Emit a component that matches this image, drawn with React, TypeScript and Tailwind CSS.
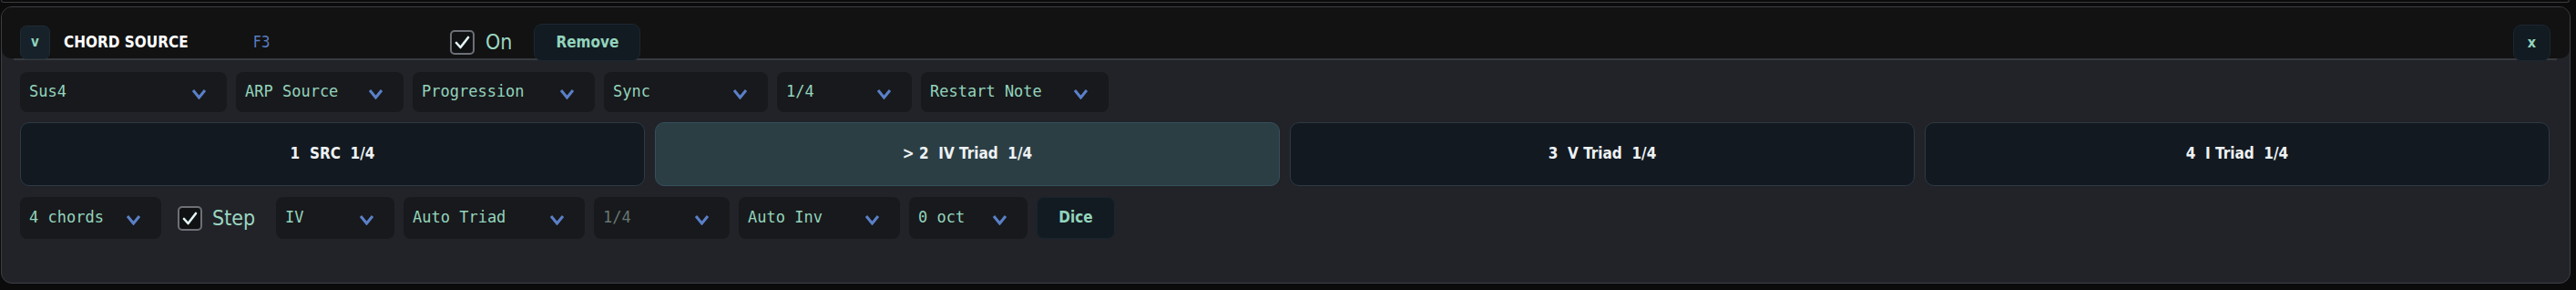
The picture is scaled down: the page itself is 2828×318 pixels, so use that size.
import React from 'react';

const cond = "font-['DejaVu_Sans_Condensed','DejaVu_Sans',sans-serif] font-stretch-condensed";
const mono = "font-['DejaVu_Sans_Mono','Liberation_Mono',monospace]";

const Chevron = () => (
  <svg width="17" height="12" viewBox="0 0 17 12" className="mt-[4px] shrink-0">
    <polyline points="2,2 8.5,10 15,2" fill="none" stroke="#5a80c8" strokeWidth="3" strokeLinejoin="miter" />
  </svg>
);

const Select = ({ label, w, h, muted }: { label: string; w: string; h: string; muted?: boolean }) => (
  <div className={`${w} ${h} shrink-0 flex items-center justify-between pl-[10px] pr-[22px] rounded-[8px] bg-[#18191c]`}>
    <span className={`${mono} text-[17px] ${muted ? 'text-[#65786f]' : 'text-[#93d4bd]'}`}>{label}</span>
    <Chevron />
  </div>
);

const Check = () => (
  <div className="w-[27px] h-[27px] shrink-0 rounded-[5px] border-2 border-[#6c7076] bg-[#101113] flex items-center justify-center">
    <svg width="19" height="17" viewBox="0 0 19 17">
      <polyline points="3,9 7.5,14 16,3" fill="none" stroke="#e2f4f6" strokeWidth="2.6" strokeLinecap="round" strokeLinejoin="round" />
    </svg>
  </div>
);

const slots = [
  { label: '1  SRC  1/4', active: false },
  { label: '> 2  IV Triad  1/4', active: true },
  { label: '3  V Triad  1/4', active: false },
  { label: '4  I Triad  1/4', active: false },
];

export default function App() {
  return (
    <div className="w-[2828px] h-[318px] bg-[#0b0b0b] overflow-hidden">
      {/* bottom edge of the panel above */}
      <div className="ml-[1px] mr-[7px] h-[3px] border-x border-b border-[#3a3c40] rounded-b-[10px]" />

      <div className="mt-[4px] ml-[1px] mr-[6px] h-[304px] rounded-[12px] border border-[#3c3f44] bg-[#212328] overflow-hidden">
        {/* Header */}
        <div className="h-[56px] bg-[#121212] rounded-b-[10px] pl-[20px] pr-[21px] pt-[18px]">
          <div className="h-[41px] flex items-center">
            <div className={`w-[33px] h-[37px] rounded-[7px] bg-[#16212a] border border-[#1f2b35] flex items-center justify-center ${cond} font-bold text-[15px] text-[#8fd3bd]`}>
              v
            </div>
            <div className={`ml-[15px] w-[208px] ${cond} font-bold text-[17px] text-white`}>CHORD SOURCE</div>
            <div className={`w-[216px] ${cond} text-[17px] text-[#5b7ec0]`}>F3</div>
            <Check />
            <span className={`ml-[12px] ${cond} text-[23px] text-[#9cd6c1]`}>On</span>
            <div className={`ml-[24px] w-[117px] h-[41px] rounded-[9px] bg-[#121b22] border border-[#1c2731] flex items-center justify-center ${cond} font-bold text-[17px] text-[#93d4bd]`}>
              Remove
            </div>
            <div className={`ml-auto w-[41px] h-[40px] rounded-[9px] bg-[#121b22] border border-[#1c2731] flex items-center justify-center ${cond} font-bold text-[16px] text-[#93d4bd]`}>
              x
            </div>
          </div>
        </div>
        <div className="ml-[13px] mr-[14px] h-[2px] bg-[#373a3f]" />

        {/* Row 1 */}
        <div className="mt-[13px] pl-[20px] flex gap-[10px]">
          <Select label="Sus4" w="w-[227px]" h="h-[44px]" />
          <Select label="ARP Source" w="w-[184px]" h="h-[44px]" />
          <Select label="Progression" w="w-[200px]" h="h-[44px]" />
          <Select label="Sync" w="w-[180px]" h="h-[44px]" />
          <Select label="1/4" w="w-[148px]" h="h-[44px]" />
          <Select label="Restart Note" w="w-[206px]" h="h-[44px]" />
        </div>

        {/* Chord slots */}
        <div className="mt-[11px] pl-[20px] pr-[22px] grid grid-cols-4 gap-[11px]">
          {slots.map((s) => (
            <div
              key={s.label}
              className={`h-[70px] rounded-[10px] border flex items-center justify-center ${
                s.active ? 'bg-[#2b3e44] border-[#36505d]' : 'bg-[#131920] border-[#2d3a46]'
              }`}
            >
              <span className={`${cond} font-bold text-[17px] text-[#eef2f4] whitespace-pre`}>{s.label}</span>
            </div>
          ))}
        </div>

        {/* Row 3 */}
        <div className="mt-[12px] pl-[20px] flex items-center">
          <Select label="4 chords" w="w-[155px]" h="h-[46px]" />
          <div className="w-[126px] pl-[18px] flex items-center">
            <Check />
            <span className={`ml-[11px] ${cond} text-[23px] text-[#9cd6c1]`}>Step</span>
          </div>
          <div className="flex gap-[10px]">
            <Select label="IV" w="w-[130px]" h="h-[46px]" />
            <Select label="Auto Triad" w="w-[199px]" h="h-[46px]" />
            <Select label="1/4" w="w-[149px]" h="h-[46px]" muted />
            <Select label="Auto Inv" w="w-[177px]" h="h-[46px]" />
            <Select label="0 oct" w="w-[130px]" h="h-[46px]" />
            <div className={`w-[86px] h-[46px] rounded-[8px] bg-[#121b22] border border-[#1a242d] flex items-center justify-center ${cond} font-bold text-[17px] text-[#93d4bd]`}>
              Dice
            </div>
          </div>
        </div>
      </div>
    </div>
  );
}
